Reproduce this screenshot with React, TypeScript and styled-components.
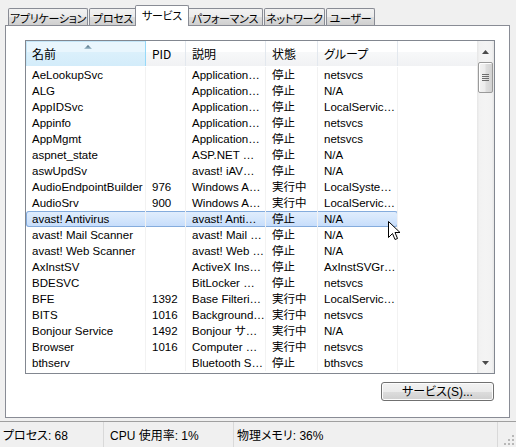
import React from 'react';
import styled, { createGlobalStyle, css } from 'styled-components';

const GlobalStyle = createGlobalStyle`
  html, body { margin: 0; padding: 0; background: #f0f0f0; }
  body {
    font-family: "Liberation Sans", "Noto Sans CJK JP", sans-serif;
    font-size: 12px;
    color: #000;
    font-feature-settings: "palt";
  }
  * { box-sizing: border-box; }
`;

const Window = styled.div`
  position: relative;
  width: 516px;
  height: 447px;
  display: flex;
  flex-direction: column;
  background: #f0f0f0;
  overflow: hidden;
`;

const TabArea = styled.div`
  padding: 5px 6px 0 5px;
  display: flex;
  flex-direction: column;
`;

const TabStrip = styled.div`
  position: relative;
  z-index: 1;
  height: 20px;
  display: flex;
  align-items: flex-end;
  padding-left: 3px;
`;

const Tab = styled.div<{ $w: number; $active?: boolean }>`
  width: ${(p) => p.$w}px;
  height: 17px;
  margin-right: 1px;
  border: 1px solid #898c95;
  border-bottom: none;
  border-radius: 2px 2px 0 0;
  background: linear-gradient(#f2f2f2 0%, #ebebeb 50%, #dddddd 51%, #cfcfcf 100%);
  display: flex;
  align-items: center;
  justify-content: center;
  font-family: "Noto Sans CJK JP", sans-serif;
  font-size: 11px;
  letter-spacing: -0.3px;
  white-space: nowrap;
  overflow: hidden;
  line-height: 14px;
  padding-top: 1px;
  color: #000;
  ${(p) =>
    p.$active &&
    css`
      position: relative;
      height: 21px;
      margin-left: -3px;
      margin-right: -2px;
      margin-bottom: -1px;
      background: #ffffff;
      padding-top: 0;
      padding-bottom: 2px;
      z-index: 2;
    `}
`;

const Panel = styled.div`
  height: 393px;
  border: 1px solid #898c95;
  background: #ffffff;
  padding: 14px 14px 0 19px;
  display: flex;
  flex-direction: column;
`;

const ListView = styled.div`
  height: 334px;
  border: 1px solid #828790;
  display: flex;
  background: #fff;
`;

const ListContent = styled.div`
  flex: 1;
  display: flex;
  flex-direction: column;
  overflow: hidden;
`;

const Header = styled.div`
  height: 25px;
  display: flex;
  flex-shrink: 0;
  background: linear-gradient(#ffffff 0%, #ffffff 45%, #f7f8f9 46%, #f1f2f4 100%);
`;

const HeaderCell = styled.div<{ $w?: number; $sorted?: boolean }>`
  position: relative;
  ${(p) => (p.$w ? `width: ${p.$w}px;` : 'flex: 1;')}
  padding-left: 6px;
  display: flex;
  align-items: center;
  border-right: 1px solid ${(p) => (p.$w ? '#e3e8ee' : 'transparent')};
  font-family: "Noto Sans CJK JP", sans-serif;
  font-size: 12px;
  line-height: 14px;
  white-space: nowrap;
  padding-top: 1px;
  ${(p) =>
    p.$sorted &&
    css`
      background: linear-gradient(#e9f6fd 0%, #e9f6fd 45%, #dbf0fb 46%, #d3ecfa 100%);
      border-right-color: #96d9f9;
      box-shadow: inset 0 1px 0 #c4e6f8, inset 1px 0 0 #c4e6f8;
    `}
`;

const SortArrow = styled.svg`
  position: absolute;
  top: 3px;
  left: 58px;
`;

const Body = styled.div`
  flex: 1;
  display: flex;
  flex-direction: column;
  padding-top: 1px;
`;

const Row = styled.div<{ $selected?: boolean }>`
  width: 372px;
  height: 16px;
  display: flex;
  flex-shrink: 0;
  border-radius: 3px;
  ${(p) =>
    p.$selected &&
    css`
      background: linear-gradient(#e2eefd 0%, #d4e6fc 50%, #c5dcfb 100%);
      box-shadow: inset 0 0 0 1px #84acdd;
    `}
`;

const Cell = styled.div<{ $w: number }>`
  width: ${(p) => p.$w}px;
  padding-left: 6px;
  border-right: 1px solid #f2f2f2;
  white-space: nowrap;
  overflow: hidden;
  font-size: 11.5px;
  line-height: 16px;
`;

const ScrollBar = styled.div`
  width: 17px;
  display: flex;
  flex-direction: column;
  background: linear-gradient(90deg, #e6e6e6 0%, #f2f2f2 15%, #f4f4f4 50%, #f2f2f2 85%, #e6e6e6 100%);
`;

const ScrollButton = styled.div`
  height: 21px;
  display: flex;
  align-items: center;
  justify-content: center;
  flex-shrink: 0;
`;

const Thumb = styled.div`
  height: 31px;
  margin: 0 1px;
  border: 1px solid #9a9a9a;
  border-radius: 2px;
  background: linear-gradient(90deg, #f3f3f3 0%, #ececec 45%, #dedede 55%, #d2d2d2 100%);
  box-shadow: inset 1px 1px 0 #ffffff;
  display: flex;
  align-items: center;
  justify-content: center;
  flex-shrink: 0;
`;

const Track = styled.div`
  flex: 1;
`;

const ButtonRow = styled.div`
  display: flex;
  justify-content: flex-end;
  margin-top: 8px;
  padding-right: 1px;
`;

const PushButton = styled.div`
  width: 113px;
  height: 19px;
  border: 1px solid #707070;
  border-radius: 3px;
  background: linear-gradient(#f2f2f2 0%, #ebebeb 50%, #dddddd 51%, #cfcfcf 100%);
  box-shadow: inset 0 0 0 1px #fcfcfc;
  display: flex;
  align-items: center;
  justify-content: center;
  font-size: 12px;
  line-height: 14px;
`;

const StatusBar = styled.div`
  margin-top: auto;
  height: 26px;
  border-top: 1px solid #a0a0a0;
  display: flex;
  align-items: stretch;
  background: #f0f0f0;
`;

const StatusPane = styled.div<{ $w?: number; $pl: number }>`
  ${(p) => (p.$w ? `width: ${p.$w}px;` : 'flex: 1;')}
  padding-left: ${(p) => p.$pl}px;
  border-right: 1px solid #d9d9d9;
  display: flex;
  align-items: center;
  font-size: 12px;
  white-space: nowrap;
`;

const Grip = styled.div`
  width: 18px;
  display: flex;
  align-items: flex-end;
  justify-content: flex-end;
  padding: 0 2px 2px 0;
`;

const Cursor = styled.svg`
  position: absolute;
  left: 388px;
  top: 221px;
`;

const columns = [120, 40, 80, 52, 80];

type Svc = [string, string, string, string, string];

const rows: Svc[] = [
  ['AeLookupSvc', '', 'Application…', '停止', 'netsvcs'],
  ['ALG', '', 'Application…', '停止', 'N/A'],
  ['AppIDSvc', '', 'Application…', '停止', 'LocalServic…'],
  ['Appinfo', '', 'Application…', '停止', 'netsvcs'],
  ['AppMgmt', '', 'Application…', '停止', 'netsvcs'],
  ['aspnet_state', '', 'ASP.NET …', '停止', 'N/A'],
  ['aswUpdSv', '', 'avast! iAV…', '停止', 'N/A'],
  ['AudioEndpointBuilder', '976', 'Windows A…', '実行中', 'LocalSyste…'],
  ['AudioSrv', '900', 'Windows A…', '実行中', 'LocalServic…'],
  ['avast! Antivirus', '', 'avast! Anti…', '停止', 'N/A'],
  ['avast! Mail Scanner', '', 'avast! Mail …', '停止', 'N/A'],
  ['avast! Web Scanner', '', 'avast! Web …', '停止', 'N/A'],
  ['AxInstSV', '', 'ActiveX Ins…', '停止', 'AxInstSVGr…'],
  ['BDESVC', '', 'BitLocker …', '停止', 'netsvcs'],
  ['BFE', '1392', 'Base Filteri…', '実行中', 'LocalServic…'],
  ['BITS', '1016', 'Background…', '実行中', 'netsvcs'],
  ['Bonjour Service', '1492', 'Bonjour サ…', '実行中', 'N/A'],
  ['Browser', '1016', 'Computer …', '実行中', 'netsvcs'],
  ['bthserv', '', 'Bluetooth S…', '停止', 'bthsvcs'],
];

const tabs = [
  { label: 'アプリケーション', w: 80 },
  { label: 'プロセス', w: 48 },
  { label: 'サービス', w: 54, active: true },
  { label: 'パフォーマンス', w: 76 },
  { label: 'ネットワーク', w: 61 },
  { label: 'ユーザー', w: 49 },
];

const headers = ['名前', 'PID', '説明', '状態', 'グループ'];

const ArrowUp = () => (
  <svg width="7" height="4" viewBox="0 0 7 4">
    <path d="M0 4 L3.5 0 L7 4 Z" fill="#4a4a4a" />
  </svg>
);

const ArrowDown = () => (
  <svg width="7" height="4" viewBox="0 0 7 4">
    <path d="M0 0 L7 0 L3.5 4 Z" fill="#4a4a4a" />
  </svg>
);

export default function App() {
  return (
    <>
      <GlobalStyle />
      <Window>
        <TabArea>
          <TabStrip>
            {tabs.map((t) => (
              <Tab key={t.label} $w={t.w} $active={t.active}>
                {t.label}
              </Tab>
            ))}
          </TabStrip>
          <Panel>
            <ListView>
              <ListContent>
                <Header>
                  {headers.map((h, i) => (
                    <HeaderCell key={h} $w={columns[i]} $sorted={i === 0}>
                      {i === 0 && (
                        <SortArrow width="8" height="5" viewBox="0 0 8 5">
                          <defs>
                            <linearGradient id="sa" x1="0" y1="0" x2="0" y2="1">
                              <stop offset="0" stopColor="#3c5e72" />
                              <stop offset="1" stopColor="#a9c6d6" />
                            </linearGradient>
                          </defs>
                          <path d="M0 5 L4 1 L8 5 Z" fill="url(#sa)" />
                        </SortArrow>
                      )}
                      {h}
                    </HeaderCell>
                  ))}
                  <HeaderCell />
                </Header>
                <Body>
                  {rows.map((r, ri) => (
                    <Row key={r[0]} $selected={ri === 9}>
                      {r.map((c, ci) => (
                        <Cell key={ci} $w={columns[ci]}>
                          {c}
                        </Cell>
                      ))}
                    </Row>
                  ))}
                </Body>
              </ListContent>
              <ScrollBar>
                <ScrollButton>
                  <ArrowUp />
                </ScrollButton>
                <Thumb>
                  <svg width="7" height="8" viewBox="0 0 7 8">
                    <rect x="0" y="0" width="7" height="1" fill="#6d6d6d" />
                    <rect x="0" y="2" width="7" height="1" fill="#6d6d6d" />
                    <rect x="0" y="4" width="7" height="1" fill="#6d6d6d" />
                    <rect x="0" y="6" width="7" height="1" fill="#6d6d6d" />
                  </svg>
                </Thumb>
                <Track />
                <ScrollButton>
                  <ArrowDown />
                </ScrollButton>
              </ScrollBar>
            </ListView>
            <ButtonRow>
              <PushButton>サービス(S)...</PushButton>
            </ButtonRow>
          </Panel>
        </TabArea>
        <StatusBar>
          <StatusPane $w={104} $pl={3}>プロセス: 68</StatusPane>
          <StatusPane $w={130} $pl={6}>CPU 使用率: 1%</StatusPane>
          <StatusPane $pl={3}>物理メモリ: 36%</StatusPane>
          <Grip>
            <svg width="10" height="10" viewBox="0 0 10 10">
              {[
                [8, 0], [8, 4], [4, 4], [8, 8], [4, 8], [0, 8],
              ].map(([x, y]) => (
                <rect key={`${x}-${y}`} x={x} y={y} width="2" height="2" fill="#b8b8b8" />
              ))}
            </svg>
          </Grip>
        </StatusBar>
        <Cursor width="13" height="20" viewBox="0 0 13 20">
          <path
            d="M0.5 0.5 L0.5 16.5 L4.5 12.5 L7 18.5 L9.5 17.5 L7 11.5 L12 11.5 Z"
            fill="#ffffff"
            stroke="#000000"
            strokeWidth="1"
            strokeLinejoin="miter"
          />
        </Cursor>
      </Window>
    </>
  );
}
